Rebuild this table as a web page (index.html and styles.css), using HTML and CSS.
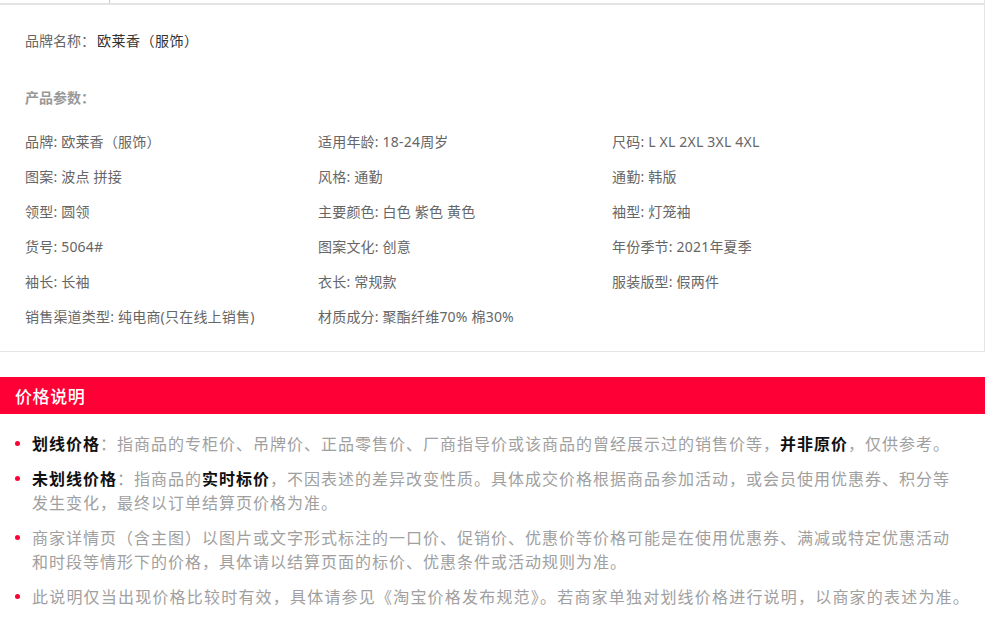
FILE: index.html
```html
<!DOCTYPE html>
<html lang="zh-CN">
<head>
<meta charset="utf-8">
<title>商品详情</title>
<link rel="stylesheet" href="styles.css">
</head>
<body>
<div class="page">
  <div class="tabs"><span class="tab"></span></div>
  <div class="attrs">
    <p class="brand">品牌名称：<span class="brand-val">欧莱香（服饰）</span></p>
    <p class="attrs-title">产品参数：</p>
    <ul class="attr-list">
      <li>品牌: 欧莱香（服饰）</li>
      <li>适用年龄: 18-24周岁</li>
      <li>尺码: L XL 2XL 3XL 4XL</li>
      <li>图案: 波点 拼接</li>
      <li>风格: 通勤</li>
      <li>通勤: 韩版</li>
      <li>领型: 圆领</li>
      <li>主要颜色: 白色 紫色 黄色</li>
      <li>袖型: 灯笼袖</li>
      <li>货号: 5064#</li>
      <li>图案文化: 创意</li>
      <li>年份季节: 2021年夏季</li>
      <li>袖长: 长袖</li>
      <li>衣长: 常规款</li>
      <li>服装版型: 假两件</li>
      <li>销售渠道类型: 纯电商(只在线上销售)</li>
      <li>材质成分: 聚酯纤维70% 棉30%</li>
    </ul>
  </div>
  <div class="price-note">
    <h3 class="price-title">价格说明</h3>
    <ul class="note-list">
      <li><b>划线价格</b>：指商品的专柜价、吊牌价、正品零售价、厂商指导价或该商品的曾经展示过的销售价等，<b>并非原价</b>，仅供参考。</li>
      <li><b>未划线价格</b>：指商品的<b>实时标价</b>，不因表述的差异改变性质。具体成交价格根据商品参加活动，或会员使用优惠券、积分等<br>发生变化，最终以订单结算页价格为准。</li>
      <li>商家详情页（含主图）以图片或文字形式标注的一口价、促销价、优惠价等价格可能是在使用优惠券、满减或特定优惠活动<br>和时段等情形下的价格，具体请以结算页面的标价、优惠条件或活动规则为准。</li>
      <li>此说明仅当出现价格比较时有效，具体请参见《淘宝价格发布规范》。若商家单独对划线价格进行说明，以商家的表述为准。</li>
    </ul>
  </div>
</div>
</body>
</html>
```

FILE: styles.css
```css
* { box-sizing: border-box; }
html, body { margin: 0; padding: 0; background: #fff; }
body {
  font-family: "Noto Sans CJK SC", "Noto Sans", "Liberation Sans", sans-serif;
}
.page { width: 985px; }

.tabs { height: 3px; display: flex; border-right: 1px solid #e5e5e5; }
.tab { width: 110px; height: 3px; border-right: 1px solid #cfc6bd; }

.attrs {
  border-top: 2px solid #e3e3e3;
  border-right: 1px solid #e5e5e5;
  border-bottom: 1px solid #e5e5e5;
  padding: 26px 0 17px 25px;
  font-family: "Noto Sans", "Noto Sans CJK SC", sans-serif;
  font-size: 14px;
  color: #666;
}
.brand { margin: 0; line-height: 20px; }
.brand-val { color: #333; margin-left: 2px; letter-spacing: 0.5px; }
.attrs-title { margin: 37px 0 0; line-height: 20px; font-weight: bold; color: #999; }
.attr-list {
  list-style: none;
  margin: 16px 0 0;
  padding: 0;
  display: grid;
  grid-template-columns: 293px 294px 1fr;
}
.attr-list li { height: 35px; line-height: 35px; white-space: nowrap; letter-spacing: 0.2px; }

.price-note { margin-top: 25px; }
.price-title {
  margin: 0;
  height: 37px;
  line-height: 37px;
  background: #ff0036;
  color: #fff;
  font-size: 17px;
  font-weight: 500;
  letter-spacing: 0.6px;
  padding-left: 15px;
}
.note-list {
  list-style: none;
  margin: 0;
  padding: 17px 0 0;
  font-size: 16px;
  line-height: 24px;
  letter-spacing: 1px;
  color: #a0a0a0;
}
.note-list li {
  position: relative;
  padding-left: 32px;
  margin-bottom: 11px;
  white-space: nowrap;
}
.note-list li:last-child { letter-spacing: 1.2px; }
.note-list li::before {
  content: "";
  position: absolute;
  left: 15px;
  top: 10px;
  width: 5px;
  height: 5px;
  border-radius: 50%;
  background: #ff0036;
}
.note-list b { color: #111; font-weight: bold; }
```
